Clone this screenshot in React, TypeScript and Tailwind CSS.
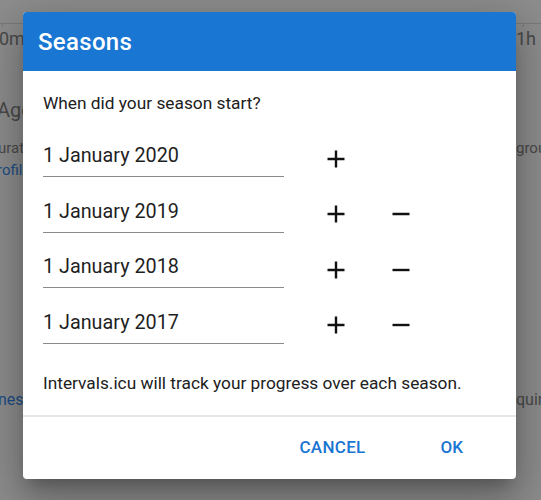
import { ReactNode } from "react";

const seasons = [
  { date: "1 January 2020", removable: false },
  { date: "1 January 2019", removable: true },
  { date: "1 January 2018", removable: true },
  { date: "1 January 2017", removable: true },
];

export default function App() {
  return (
    <div
      className="relative w-[541px] h-[500px] overflow-hidden bg-[#8d8d8d]"
      style={{ fontFamily: "Roboto, 'Liberation Sans', sans-serif" }}
    >
      {/* page behind the dialog, dimmed */}
      <div className="flex flex-col text-[#4a4a4a]">
        <div className="relative mt-[23px] h-px bg-[#7a7a7a]">
          <span className="absolute left-[2px] top-0 h-[4px] w-px bg-[#7a7a7a]"></span>
          <span className="absolute left-[523px] top-0 h-[4px] w-px bg-[#7a7a7a]"></span>
        </div>
        <Row top="mt-[3px]" size="text-[18px] leading-[24px]" left="0m" right="1h" leftShift="-ml-[1px]" />
        <Row top="mt-[46px]" size="text-[20px] leading-[26px]" left="Age" leftShift="-ml-[3px]" />
        <Row top="mt-[15px]" size="text-[15px] leading-[20px]" left="urat" right="group" leftShift="-ml-[2px]" />
        <Row
          top="mt-[2px]"
          size="text-[15px] leading-[20px]"
          left="rofil"
          leftShift="-ml-[3px]"
          leftColor="text-[#1c4e86]"
        />
        <Row
          top="mt-[210px]"
          size="text-[16px] leading-[20px]"
          left="ness"
          right="quir"
          leftShift="-ml-[2px]"
          leftColor="text-[#1c4e86]"
        />
      </div>

      {/* dialog */}
      <div className="absolute left-[23px] top-[12px] w-[493px] h-[467px] flex flex-col bg-white rounded-[4px] overflow-hidden shadow-[0_11px_15px_-7px_rgba(0,0,0,0.25),0_24px_38px_3px_rgba(0,0,0,0.16),0_9px_46px_8px_rgba(0,0,0,0.14)]">
        <div className="h-[59px] flex items-center pl-[15px] bg-[#1976d2]">
          <h2 className="text-white text-[24px] font-medium leading-none tracking-[0.3px]">
            Seasons
          </h2>
        </div>

        <div className="flex flex-col px-[20px] pt-[20px] text-[#212121]">
          <p className="text-[17.3px] leading-[24px]">When did your season start?</p>

          <div className="flex flex-col gap-[20.5px] mt-[27px]">
            {seasons.map((s) => (
              <div key={s.date} className="flex items-start">
                <div className="w-[241px] pb-[6px] border-b border-[#8a8a8a]">
                  <div className="text-[19.8px] leading-[28px] text-[#1f1f1f]">{s.date}</div>
                </div>
                <div className="flex items-center h-[33px] ml-[28px] gap-[17px]">
                  <IconButton>
                    <PlusIcon />
                  </IconButton>
                  {s.removable && (
                    <IconButton>
                      <MinusIcon />
                    </IconButton>
                  )}
                </div>
              </div>
            ))}
          </div>

          <p className="mt-[27px] text-[17.3px] leading-[24px]">
            Intervals.icu will track your progress over each season.
          </p>
        </div>

        <div className="mt-[20px] h-[2px] bg-[#e6e6e6]"></div>

        <div className="flex-1 flex items-center justify-end pr-[53px]">
          <button className="text-[17px] font-medium text-[#1976d2] tracking-[0.3px]">CANCEL</button>
          <button className="ml-[75px] text-[17px] font-medium text-[#1976d2]">OK</button>
        </div>
      </div>
    </div>
  );
}

interface RowProps {
  top: string;
  size: string;
  left: string;
  right?: string;
  leftShift: string;
  leftColor?: string;
}

function Row({ top, size, left, right, leftShift, leftColor = "" }: RowProps) {
  return (
    <div className={`flex ${top} ${size}`}>
      <span className={`${leftShift} ${leftColor} whitespace-nowrap`}>{left}</span>
      {right && <span className="ml-auto w-[25px] whitespace-nowrap">{right}</span>}
    </div>
  );
}

function IconButton({ children }: { children: ReactNode }) {
  return <span className="w-[48px] h-[33px] flex items-center justify-center">{children}</span>;
}

function PlusIcon() {
  return (
    <svg width="18" height="18" viewBox="0 0 18 18">
      <path d="M9 0.5v17M0.5 9h17" stroke="#111" strokeWidth="2.4" />
    </svg>
  );
}

function MinusIcon() {
  return (
    <svg width="18" height="18" viewBox="0 0 18 18">
      <path d="M0.5 9h17" stroke="#111" strokeWidth="2.4" />
    </svg>
  );
}
